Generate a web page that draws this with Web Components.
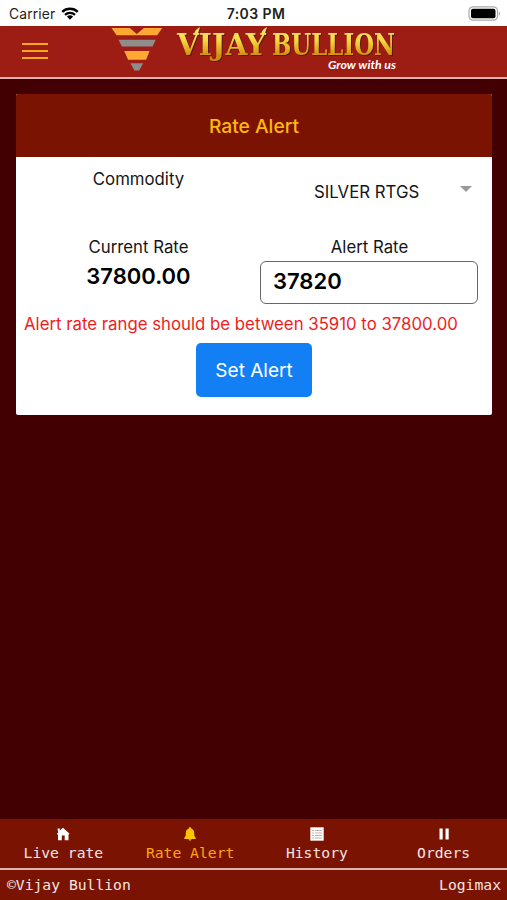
<!DOCTYPE html>
<html lang="en">
<head>
<meta charset="utf-8">
<meta name="viewport" content="width=device-width, initial-scale=1">
<title>Vijay Bullion</title>
<style>
body {
    margin: 0;
    height: 900px;
    overflow: hidden;
    background-color: #430003;
    font-family: Inter, "Liberation Sans", sans-serif;
    color: #151517;
}
</style>
</head>
<body>
<bullion-app>
    <status-bar slot="top" carrier="Carrier" time="7:03 PM"></status-bar>
    <brand-header slot="top"></brand-header>
    <alert-card heading="Rate Alert">
        <rate-alert-form commodity="SILVER RTGS" current="37800.00" alert="37820" min="35910"></rate-alert-form>
    </alert-card>
    <tab-bar slot="bottom">
        <tab-item icon="home">Live rate</tab-item>
        <tab-item icon="bell" active>Rate Alert</tab-item>
        <tab-item icon="list">History</tab-item>
        <tab-item icon="pause">Orders</tab-item>
    </tab-bar>
    <app-footer slot="bottom">
        <span>©Vijay Bullion</span>
        <span slot="end">Logimax</span>
    </app-footer>
</bullion-app>

<script>
function template(html) {
    const element = document.createElement('template');
    element.innerHTML = html;
    return element;
}

const appTemplate = template(`
<style>
:host {
    display: flex;
    flex-direction: column;
    height: 100%;
}
main {
    flex: 1;
    padding: 15px 15px 0 16px;
}
</style>
<slot name="top"></slot>
<main><slot></slot></main>
<slot name="bottom"></slot>
`);

const statusTemplate = template(`
<style>
:host {
    display: grid;
    grid-template-columns: 1fr auto 1fr;
    align-items: center;
    height: 26px;
    box-sizing: border-box;
    padding: 1px 6px 0 9px;
    background-color: #fff;
    color: #222;
    font-size: 13.8px;
}
.carrier {
    display: flex;
    align-items: center;
    gap: 6px;
}
.carrier span {
    letter-spacing: .15px;
}
.time {
    font-weight: 600;
    font-size: 14px;
    letter-spacing: .4px;
    padding-left: 2px;
}
.battery {
    justify-self: end;
}
svg {
    display: block;
}
</style>
<div class="carrier">
    <span class="name"></span>
    <svg width="18" height="13" viewBox="0 0 18 13">
        <g fill="none" stroke="#000" stroke-width="2.3">
            <path d="M1.2 4.9a11.2 11.2 0 0 1 15.6 0"/>
            <path d="M4 7.9a7.3 7.3 0 0 1 10 0"/>
        </g>
        <path d="M5.9 9.6a4.6 4.6 0 0 1 6.2 0L9 12.8z"/>
    </svg>
</div>
<div class="time"></div>
<svg class="battery" width="33" height="15" viewBox="0 0 33 15">
    <rect x="1" y=".8" width="28.5" height="13.4" rx="4" fill="#fff" stroke="#aaa" stroke-width="1.2"/>
    <rect x="3" y="2.8" width="24.5" height="9.4" rx="2"/>
    <path d="M30.9 5.4c1.5.5 1.5 3.7 0 4.2z" fill="#aaa"/>
</svg>
`);

const headerTemplate = template(`
<style>
:host {
    display: flex;
    height: 53px;
    box-sizing: border-box;
    padding-left: 22px;
    background-color: #9d1d14;
    border-bottom: 2px solid #dfb5af;
}
button {
    display: flex;
    flex-direction: column;
    gap: 4.5px;
    width: 26px;
    padding: 0;
    margin: 17px 63px 0 0;
    border: none;
    background: none;
}
button i {
    height: 2.3px;
    width: 26px;
    background-color: #f5a81c;
}
svg {
    overflow: visible;
}
.word {
    filter: drop-shadow(1.5px 1px .7px #5d170b);
}
</style>
<button aria-label="Menu"><i></i><i></i><i></i></button>
<svg width="290" height="51" viewBox="111 26 290 51">
    <defs>
        <linearGradient id="gold" gradientUnits="userSpaceOnUse" x1="0" y1="30" x2="0" y2="56">
            <stop offset="0" stop-color="#ffe565"/>
            <stop offset=".4" stop-color="#f7d643"/>
            <stop offset="1" stop-color="#d08c0c"/>
        </linearGradient>
    </defs>
    <path fill="#ffa834" d="M111.5 28h18.2l7.1 6 7.1-6h18.3l-5 7.2h-40.6z"/>
    <path fill="#8f8c8c" d="M118.5 39.8h37.2l-3.2 6.6h-30.6z"/>
    <path fill="#ffa834" d="M124.2 51h25.4l-3.5 8.8h-18z"/>
    <path fill="#8f8c8c" d="M130.4 63.2h12.8l-4 7.3h-4.8z"/>
    <g class="word" fill="url(#gold)" font-family="'DejaVu Serif', serif" font-weight="700" font-size="30.5">
        <text x="177" y="54.5" textLength="89" lengthAdjust="spacingAndGlyphs">VIJAY</text>
        <text x="272" y="54.5" textLength="123" lengthAdjust="spacingAndGlyphs">BULLION</text>
        <path d="M194 34.500c.8-3.500 2.500-5.800 6-7.500-.8 3-1.500 5-2.500 7.500zM261 34.500c.8-3.500 2.500-5.800 6-7.500-.8 3-1.500 5-2.500 7.500z"/>
    </g>
    <text x="328" y="69.3" textLength="68" lengthAdjust="spacingAndGlyphs" fill="#fff" font-family="Lato, sans-serif" font-size="11.5" font-style="italic" font-weight="700">Grow with us</text>
</svg>
`);

const cardTemplate = template(`
<style>
:host {
    display: block;
    height: 321px;
    background-color: #fff;
    border-radius: 2px;
    overflow: hidden;
}
header {
    height: 63px;
    display: flex;
    align-items: center;
    justify-content: center;
    background-color: #7b1302;
    color: #ffb70b;
    font-size: 19.2px;
    font-weight: 500;
    padding-top: 1px;
    box-sizing: border-box;
}
</style>
<header></header>
<slot></slot>
`);

const formTemplate = template(`
<style>
:host {
    display: block;
    font-size: 16.8px;
}
.row {
    display: grid;
    grid-template-columns: 245px 217px;
}
.commodity {
    height: 80px;
}
.label {
    text-align: center;
    line-height: 20px;
}
.commodity .label {
    padding-top: 12px;
}
.select {
    display: flex;
    justify-content: space-between;
    align-items: center;
    height: 20px;
    padding: 25px 6px 0 53px;
}
.select svg {
    margin-top: -7px;
}
.current {
    text-align: center;
    font-size: 22px;
    font-weight: 600;
    line-height: 26px;
    margin-top: 6px;
    color: #000;
}
input {
    display: block;
    box-sizing: border-box;
    width: 218px;
    height: 43px;
    margin: 4px 0 0 -1px;
    padding: 0 12px 3px;
    border: 1.5px solid #666;
    border-radius: 6px;
    background-color: #fff;
    font: 600 22px Inter, sans-serif;
    color: #000;
}
.error {
    margin: 10px 0 0 8px;
    line-height: 20px;
    color: #f01c1c;
    white-space: nowrap;
}
.submit {
    display: block;
    width: 116px;
    height: 54px;
    margin: 9px 0 0 180px;
    padding: 0;
    border: none;
    border-radius: 5px;
    background-color: #127ff5;
    color: #fff;
    font: 400 19px Inter, sans-serif;
}
</style>
<div class="row commodity">
    <div class="label">Commodity</div>
    <div class="select">
        <span></span>
        <svg width="12" height="6" viewBox="0 0 12 6"><path d="M0 0h12L6 6z" fill="#999"/></svg>
    </div>
</div>
<div class="row">
    <div>
        <div class="label">Current Rate</div>
        <div class="current"></div>
    </div>
    <div>
        <div class="label">Alert Rate</div>
        <input type="text" inputmode="decimal">
    </div>
</div>
<div class="error"></div>
<button class="submit">Set Alert</button>
`);

const tabBarTemplate = template(`
<style>
:host {
    display: grid;
    grid-template-columns: repeat(4, 1fr);
    height: 51px;
    box-sizing: border-box;
    background-color: #7b1302;
    border-bottom: 2px solid #dfb5af;
}
</style>
<slot></slot>
`);

const tabTemplate = template(`
<style>
:host {
    display: flex;
    flex-direction: column;
    align-items: center;
    padding-top: 8px;
    color: #f6e5e2;
    fill: #fff;
    font: 14.7px/18px "DejaVu Sans Mono", monospace;
}
:host([active]) {
    color: #ffa40b;
    fill: #ffc400;
}
svg {
    display: block;
    margin-bottom: 3px;
}
</style>
<svg width="14" height="14" viewBox="0 0 14 14"></svg>
<span><slot></slot></span>
`);

const footerTemplate = template(`
<style>
:host {
    display: flex;
    justify-content: space-between;
    height: 30px;
    box-sizing: border-box;
    padding: 6px 6px 0 7px;
    background-color: #7b1302;
    color: #f6e5e2;
    font: 14.7px/18px "DejaVu Sans Mono", monospace;
}
</style>
<slot></slot>
<slot name="end"></slot>
`);

const icons = {
    home: '<path d="M1.5 1.5h2.3v2L7 .7l6.5 6.1-1 .9v5.6H8.7V8.5H5.8v4.8H2V7.7l-1.2-.8 1.4-1.5z"/>',
    bell: '<path d="M7 .3c.8 0 1.2.5 1.2 1.1 2.1.6 3 2.3 3 4.5 0 2.8.4 4 1.5 4.8v1.2H1.3v-1.2c1.1-.8 1.5-2 1.5-4.8 0-2.2.9-3.9 3-4.5C5.8.8 6.2.3 7 .3zM5.5 12.2h3c0 1.8-3 1.8-3 0z"/>',
    list: '<path d="M.3.3h13.4v13.4H.3z"/><path d="M2 3.5h2m1 0h7M2 6h2m1 0h7M2 8.5h2m1 0h7M2 11h2m1 0h7" stroke="#b59a94" stroke-width=".8"/>',
    pause: '<path d="M2.5 1.5h3.2v11H2.5zM8.5 1.5h3.2v11H8.5z"/>'
};

class BaseElement extends HTMLElement {
    constructor(source) {
        super();
        const shadowRoot = this.attachShadow({mode: 'open'});
        shadowRoot.appendChild(source.content.cloneNode(true));
    }

    setText(selector, value) {
        this.shadowRoot.querySelector(selector).textContent = value;
    }
}

class BullionApp extends BaseElement {
    constructor() {
        super(appTemplate);
    }
}

class StatusBar extends BaseElement {
    constructor() {
        super(statusTemplate);
    }

    connectedCallback() {
        this.setText('.name', this.getAttribute('carrier'));
        this.setText('.time', this.getAttribute('time'));
    }
}

class BrandHeader extends BaseElement {
    constructor() {
        super(headerTemplate);
    }
}

class AlertCard extends BaseElement {
    constructor() {
        super(cardTemplate);
    }

    connectedCallback() {
        this.setText('header', this.getAttribute('heading'));
    }
}

class RateAlertForm extends BaseElement {
    constructor() {
        super(formTemplate);
    }

    connectedCallback() {
        const current = this.getAttribute('current');
        this.setText('.select span', this.getAttribute('commodity'));
        this.setText('.current', current);
        this.setText('.error', `Alert rate range should be between ${this.getAttribute('min')} to ${current}`);
        this.shadowRoot.querySelector('input').value = this.getAttribute('alert');
    }
}

class TabBar extends BaseElement {
    constructor() {
        super(tabBarTemplate);
    }
}

class TabItem extends BaseElement {
    constructor() {
        super(tabTemplate);
    }

    connectedCallback() {
        this.shadowRoot.querySelector('svg').innerHTML = icons[this.getAttribute('icon')];
    }
}

class AppFooter extends BaseElement {
    constructor() {
        super(footerTemplate);
    }
}

window.customElements.define('bullion-app', BullionApp);
window.customElements.define('status-bar', StatusBar);
window.customElements.define('brand-header', BrandHeader);
window.customElements.define('alert-card', AlertCard);
window.customElements.define('rate-alert-form', RateAlertForm);
window.customElements.define('tab-bar', TabBar);
window.customElements.define('tab-item', TabItem);
window.customElements.define('app-footer', AppFooter);
</script>
</body>
</html>
